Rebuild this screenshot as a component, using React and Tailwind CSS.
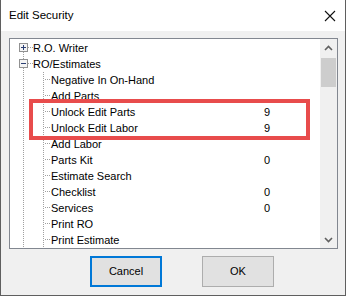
import React from "react";

const rows = [
  { label: "R.O. Writer", level: 1, box: "plus" },
  { label: "RO/Estimates", level: 1, box: "minus" },
  { label: "Negative In On-Hand", level: 2 },
  { label: "Add Parts", level: 2 },
  { label: "Unlock Edit Parts", level: 2, value: "9" },
  { label: "Unlock Edit Labor", level: 2, value: "9" },
  { label: "Add Labor", level: 2 },
  { label: "Parts Kit", level: 2, value: "0" },
  { label: "Estimate Search", level: 2 },
  { label: "Checklist", level: 2, value: "0" },
  { label: "Services", level: 2, value: "0" },
  { label: "Print RO", level: 2 },
  { label: "Print Estimate", level: 2 },
];

const dot = { stroke: "#a0a0a0", strokeWidth: 1, strokeDasharray: "1 1" };

function TreeLines({ row, index }) {
  const w = row.level === 1 ? 23 : 41;
  return (
    <svg width={w} height="16" className="shrink-0">
      {row.level === 1 ? (
        <>
          {index > 0 && <line x1="13.5" y1="0" x2="13.5" y2="3" {...dot} />}
          <line x1="13.5" y1="12" x2="13.5" y2="16" {...dot} />
          <line x1="18" y1="7.5" x2="23" y2="7.5" {...dot} />
          <rect x="9.5" y="3.5" width="8" height="8" fill="#f4f4f4" stroke="#919191" />
          <line x1="11" y1="7.5" x2="16" y2="7.5" stroke="#2b3f73" />
          {row.box === "plus" && (
            <line x1="13.5" y1="5" x2="13.5" y2="10" stroke="#2b3f73" />
          )}
        </>
      ) : (
        <>
          <line x1="13.5" y1="0" x2="13.5" y2="16" {...dot} />
          <line x1="33.5" y1="0" x2="33.5" y2="16" {...dot} />
          <line x1="35" y1="7.5" x2="41" y2="7.5" {...dot} />
        </>
      )}
    </svg>
  );
}

function ScrollBar() {
  return (
    <div className="w-[17px] shrink-0 bg-[#f0f0f0] flex flex-col">
      <div className="h-[17px] flex items-center justify-center">
        <svg width="9" height="6" viewBox="0 0 9 6">
          <path d="M1 5 L4.5 1.5 L8 5" fill="none" stroke="#606060" strokeWidth="1.6" />
        </svg>
      </div>
      <div className="mt-[2px] mx-[1px] h-[29px] bg-[#cdcdcd]" />
      <div className="flex-1" />
      <div className="h-[17px] flex items-center justify-center">
        <svg width="9" height="6" viewBox="0 0 9 6">
          <path d="M1 1 L4.5 4.5 L8 1" fill="none" stroke="#606060" strokeWidth="1.6" />
        </svg>
      </div>
    </div>
  );
}

export default function App() {
  return (
    <div
      className="w-[347px] h-[297px] bg-white"
      style={{ fontFamily: '"Liberation Sans", Arial, sans-serif' }}
    >
      <div className="w-[346px] h-[296px] border-x border-b border-[#5f5f5f] bg-[#f0f0f0] flex flex-col">
        {/* title bar */}
        <div className="h-[31px] bg-white flex items-center justify-between pl-[8px] pr-[9px]">
          <span className="text-[11.5px] text-black">Edit Security</span>
          <svg width="12" height="12" viewBox="0 0 12 12">
            <path d="M1 1 L11 11 M11 1 L1 11" stroke="#111" strokeWidth="1.1" />
          </svg>
        </div>

        {/* tree */}
        <div className="mt-[7px] ml-[8px] w-[329px] h-[211px] border border-[#828790] bg-white flex">
          <div className="relative flex-1 pt-[1px] overflow-hidden">
            {rows.map((row, i) => (
              <div key={row.label} className="h-[16px] flex items-center text-[11px] text-black">
                <div className="w-[254px] flex items-center">
                  <TreeLines row={row} index={i} />
                  <span className="leading-[16px] whitespace-nowrap">{row.label}</span>
                </div>
                <span className="leading-[16px]">{row.value}</span>
              </div>
            ))}
            <div className="absolute left-[19px] top-[60px] w-[281px] h-[41px] border-[4px] border-[#e84c4c]" />
          </div>
          <ScrollBar />
        </div>

        {/* buttons */}
        <div className="mt-[7px] flex pl-[89px] gap-[40px]">
          <button className="w-[72px] h-[31px] border-2 border-[#0078d7] bg-[#e1e1e1] text-[11px] text-black">
            Cancel
          </button>
          <button className="w-[72px] h-[31px] border border-[#adadad] bg-[#e1e1e1] text-[11px] text-black">
            OK
          </button>
        </div>
      </div>
    </div>
  );
}
